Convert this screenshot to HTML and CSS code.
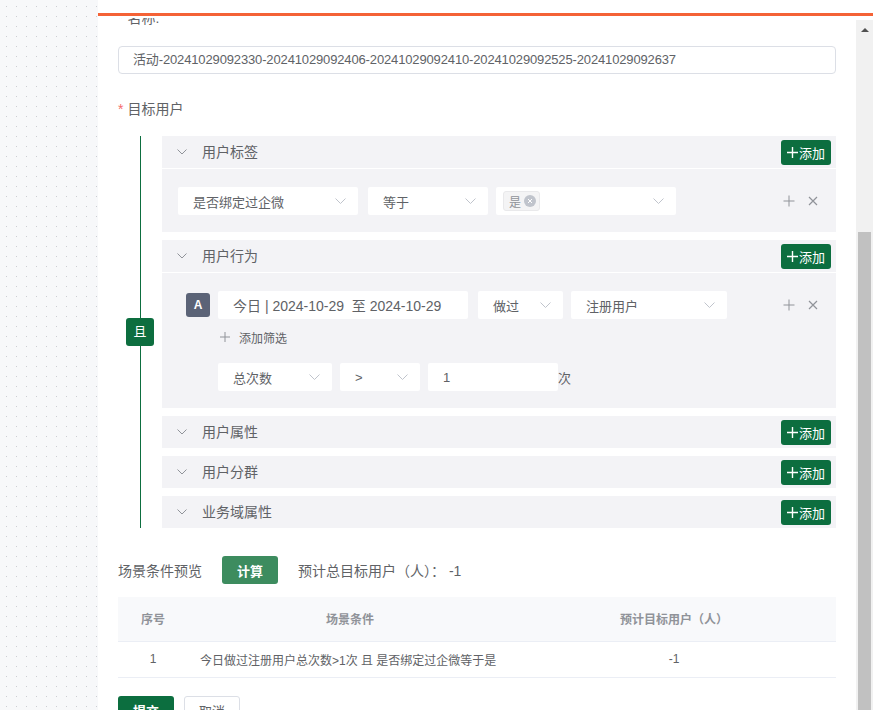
FILE: index.html
```html
<!DOCTYPE html>
<html lang="zh-CN">
<head>
<meta charset="utf-8">
<title>目标用户</title>
<link rel="stylesheet" href="styles.css">
</head>
<body>
<div class="canvas"></div>
<div class="panel">
  <div class="topbar"></div>
  <div class="accent"></div>
  <div class="gap-strip"></div>
  <div class="viewport">
    <div class="content">
      <div class="label cut"><span class="star">*</span>名称:</div>
      <div class="text-input">活动-20241029092330-20241029092406-20241029092410-20241029092525-20241029092637</div>
      <div class="label target"><span class="star">*</span>目标用户</div>

      <div class="groups">
        <div class="rail">
          <div class="rail-line"></div>
          <div class="and-badge">且</div>
          <div class="rail-line"></div>
        </div>
        <div class="sections">
          <div class="section">
            <div class="sec-head">
              <svg class="chev" width="10" height="6" viewBox="0 0 10 6"><polyline points="0.5,0.5 5,5 9.5,0.5" fill="none" stroke="#909399" stroke-width="1"/></svg>
              <span class="sec-title">用户标签</span>
              <button class="add-btn"><svg width="11" height="11" viewBox="0 0 11 11"><path d="M5.5 0v11M0 5.5h11" stroke="#fff" stroke-width="1.4"/></svg>添加</button>
            </div>
            <div class="sec-body">
              <div class="cond-row">
                <div class="select w180"><span>是否绑定过企微</span><svg class="sel-chev" width="11" height="6" viewBox="0 0 11 6"><polyline points="0.5,0.5 5.5,5.5 10.5,0.5" fill="none" stroke="#c0c4cc" stroke-width="1"/></svg></div>
                <div class="select w120 gap10"><span>等于</span><svg class="sel-chev" width="11" height="6" viewBox="0 0 11 6"><polyline points="0.5,0.5 5.5,5.5 10.5,0.5" fill="none" stroke="#c0c4cc" stroke-width="1"/></svg></div>
                <div class="select w180 gap8 tagsel"><span class="tag">是<i class="tag-x"><svg width="6" height="6" viewBox="0 0 6 6"><path d="M1 1l4 4M5 1l-4 4" stroke="#fff" stroke-width="1"/></svg></i></span><svg class="sel-chev" width="11" height="6" viewBox="0 0 11 6"><polyline points="0.5,0.5 5.5,5.5 10.5,0.5" fill="none" stroke="#c0c4cc" stroke-width="1"/></svg></div>
                <div class="row-ops">
                  <svg width="12" height="12" viewBox="0 0 12 12"><path d="M6 0.5v11M0.5 6h11" stroke="#909399" stroke-width="1"/></svg>
                  <svg width="12" height="12" viewBox="0 0 12 12"><path d="M2 2l8 8M10 2l-8 8" stroke="#909399" stroke-width="1.2"/></svg>
                </div>
              </div>
            </div>
          </div>

          <div class="section">
            <div class="sec-head">
              <svg class="chev" width="10" height="6" viewBox="0 0 10 6"><polyline points="0.5,0.5 5,5 9.5,0.5" fill="none" stroke="#909399" stroke-width="1"/></svg>
              <span class="sec-title">用户行为</span>
              <button class="add-btn"><svg width="11" height="11" viewBox="0 0 11 11"><path d="M5.5 0v11M0 5.5h11" stroke="#fff" stroke-width="1.4"/></svg>添加</button>
            </div>
            <div class="sec-body behavior">
              <div class="cond-row">
                <div class="letter">A</div>
                <div class="select w250 gap8 date"><span>今日 | 2024-10-29&nbsp; 至 2024-10-29</span></div>
                <div class="select w85 gap10"><span>做过</span><svg class="sel-chev" width="11" height="6" viewBox="0 0 11 6"><polyline points="0.5,0.5 5.5,5.5 10.5,0.5" fill="none" stroke="#c0c4cc" stroke-width="1"/></svg></div>
                <div class="select w156 gap8"><span>注册用户</span><svg class="sel-chev" width="11" height="6" viewBox="0 0 11 6"><polyline points="0.5,0.5 5.5,5.5 10.5,0.5" fill="none" stroke="#c0c4cc" stroke-width="1"/></svg></div>
                <div class="row-ops">
                  <svg width="12" height="12" viewBox="0 0 12 12"><path d="M6 0.5v11M0.5 6h11" stroke="#909399" stroke-width="1"/></svg>
                  <svg width="12" height="12" viewBox="0 0 12 12"><path d="M2 2l8 8M10 2l-8 8" stroke="#909399" stroke-width="1.2"/></svg>
                </div>
              </div>
              <div class="add-filter"><svg width="10" height="10" viewBox="0 0 10 10"><path d="M5 0v10M0 5h10" stroke="#909399" stroke-width="1"/></svg><span>添加筛选</span></div>
              <div class="cond-row sub">
                <div class="select w114"><span>总次数</span><svg class="sel-chev" width="11" height="6" viewBox="0 0 11 6"><polyline points="0.5,0.5 5.5,5.5 10.5,0.5" fill="none" stroke="#c0c4cc" stroke-width="1"/></svg></div>
                <div class="select w80 gap8"><span>&gt;</span><svg class="sel-chev" width="11" height="6" viewBox="0 0 11 6"><polyline points="0.5,0.5 5.5,5.5 10.5,0.5" fill="none" stroke="#c0c4cc" stroke-width="1"/></svg></div>
                <div class="select w130 gap8"><span>1</span></div>
                <span class="unit">次</span>
              </div>
            </div>
          </div>

          <div class="section">
            <div class="sec-head">
              <svg class="chev" width="10" height="6" viewBox="0 0 10 6"><polyline points="0.5,0.5 5,5 9.5,0.5" fill="none" stroke="#909399" stroke-width="1"/></svg>
              <span class="sec-title">用户属性</span>
              <button class="add-btn"><svg width="11" height="11" viewBox="0 0 11 11"><path d="M5.5 0v11M0 5.5h11" stroke="#fff" stroke-width="1.4"/></svg>添加</button>
            </div>
          </div>
          <div class="section">
            <div class="sec-head">
              <svg class="chev" width="10" height="6" viewBox="0 0 10 6"><polyline points="0.5,0.5 5,5 9.5,0.5" fill="none" stroke="#909399" stroke-width="1"/></svg>
              <span class="sec-title">用户分群</span>
              <button class="add-btn"><svg width="11" height="11" viewBox="0 0 11 11"><path d="M5.5 0v11M0 5.5h11" stroke="#fff" stroke-width="1.4"/></svg>添加</button>
            </div>
          </div>
          <div class="section">
            <div class="sec-head">
              <svg class="chev" width="10" height="6" viewBox="0 0 10 6"><polyline points="0.5,0.5 5,5 9.5,0.5" fill="none" stroke="#909399" stroke-width="1"/></svg>
              <span class="sec-title">业务域属性</span>
              <button class="add-btn"><svg width="11" height="11" viewBox="0 0 11 11"><path d="M5.5 0v11M0 5.5h11" stroke="#fff" stroke-width="1.4"/></svg>添加</button>
            </div>
          </div>
        </div>
      </div>

      <div class="preview-bar">
        <span class="preview-title">场景条件预览</span>
        <button class="calc-btn">计算</button>
        <span class="estimate">预计总目标用户（人）： -1</span>
      </div>

      <table class="preview-table">
        <colgroup><col class="c1"><col class="c2"><col class="c3"></colgroup>
        <thead>
          <tr><th>序号</th><th>场景条件</th><th>预计目标用户（人）</th></tr>
        </thead>
        <tbody>
          <tr><td class="center">1</td><td>今日做过注册用户总次数&gt;1次 且 是否绑定过企微等于是</td><td class="center">-1</td></tr>
        </tbody>
      </table>

      <div class="footer-btns">
        <button class="submit-btn">提交</button>
        <button class="cancel-btn">取消</button>
      </div>
    </div>
    <div class="scrollbar">
      <div class="sb-arrow"></div>
      <div class="sb-track"><div class="sb-thumb"></div></div>
    </div>
  </div>
</div>
</body>
</html>
```

FILE: styles.css
```css
* { box-sizing: border-box; }
html, body { margin: 0; padding: 0; }
body {
  width: 873px;
  height: 710px;
  overflow: hidden;
  display: flex;
  font-family: "Liberation Sans", "Noto Sans CJK SC", sans-serif;
  color: #606266;
  background: #fff;
}
.canvas {
  width: 98px;
  flex: none;
  background-color: #f7f8fa;
  background-image:
    linear-gradient(to right, rgba(247,248,250,0) 0, rgba(247,248,250,0) 1px, #f7f8fa 1px, #f7f8fa 100%),
    linear-gradient(to bottom, #ccced3 0, #ccced3 1px, #f7f8fa 1px, #f7f8fa 100%);
  background-size: 10px 10px, 10px 10px;
  background-position: 6px 6px, 6px 6px;
}
.panel {
  flex: 1;
  display: flex;
  flex-direction: column;
  background: #fff;
  min-width: 0;
}
.topbar { height: 13px; flex: none; }
.accent { height: 3px; background: #f46236; flex: none; }
.gap-strip { height: 2px; flex: none; }
.viewport {
  flex: 1;
  display: flex;
  min-height: 0;
}
.content {
  flex: 1;
  overflow: hidden;
  padding: 0 20px;
  min-width: 0;
}
.label {
  font-size: 14px;
  line-height: 20px;
  height: 20px;
  color: #606266;
}
.label .star { color: #f56c6c; margin-right: 4px; }
.label.cut { margin-top: -10px; }
.text-input {
  margin-top: 18px;
  height: 28px;
  border: 1px solid #dcdfe6;
  border-radius: 4px;
  padding: 0 14px;
  font-size: 13px;
  line-height: 26px;
  letter-spacing: -0.14px;
  color: #606266;
  white-space: nowrap;
  overflow: hidden;
}
.label.target { margin-top: 25px; }

.groups {
  margin-top: 17px;
  display: flex;
}
.rail {
  width: 44px;
  flex: none;
  display: flex;
  flex-direction: column;
  align-items: center;
}
.rail-line {
  flex: 1;
  width: 1px;
  background: #0d6e3f;
}
.and-badge {
  width: 28px;
  height: 28px;
  border-radius: 3px;
  background: #0d6e3f;
  color: #fff;
  font-size: 13px;
  line-height: 28px;
  text-align: center;
}
.sections {
  flex: 1;
  display: flex;
  flex-direction: column;
  gap: 8px;
}
.section { background: #f3f3f6; }
.sec-head {
  height: 32px;
  display: flex;
  align-items: center;
  padding: 0 5px 0 15px;
}
.chev { flex: none; }
.sec-title {
  margin-left: 15px;
  font-size: 14px;
  line-height: 20px;
  color: #606266;
  flex: 1;
}
.add-btn {
  width: 50px;
  height: 25px;
  border: none;
  border-radius: 3px;
  background: #0c6e3f;
  color: #fff;
  font-family: inherit;
  font-size: 13px;
  display: flex;
  align-items: center;
  justify-content: center;
  gap: 1px;
  padding: 0;
}
.sec-body {
  border-top: 1px solid #fff;
  padding: 18px 17px 17px 16px;
}
.sec-body.behavior { padding: 18px 17px 17px 24px; }
.cond-row {
  display: flex;
  align-items: center;
  height: 28px;
}
.select {
  height: 28px;
  background: #fff;
  border-radius: 2px;
  display: flex;
  align-items: center;
  padding: 0 12px 0 15px;
  font-size: 13px;
  color: #606266;
  flex: none;
  white-space: nowrap;
}
.select span:first-child { flex: 1; }
.select.date { font-size: 14px; }
.gap8 { margin-left: 8px; }
.gap10 { margin-left: 10px; }
.w180 { width: 180px; }
.w120 { width: 120px; }
.w250 { width: 250px; }
.w85 { width: 85px; }
.w156 { width: 156px; }
.w114 { width: 114px; }
.w80 { width: 80px; }
.w130 { width: 130px; }
.tagsel { padding-left: 7px; }
.tag {
  flex: none !important;
  display: inline-flex;
  align-items: center;
  height: 20px;
  padding: 0 3px 0 5px;
  background: #f4f4f5;
  border: 1px solid #e9e9eb;
  border-radius: 3px;
  font-size: 12px;
  color: #909399;
  gap: 3px;
}
.tagsel .sel-chev { margin-left: auto; }
.tag-x {
  width: 12px;
  height: 12px;
  border-radius: 50%;
  background: #c0c4cc;
  display: inline-flex;
  align-items: center;
  justify-content: center;
}
.row-ops {
  margin-left: auto;
  display: flex;
  gap: 12px;
  align-items: center;
}
.letter {
  width: 24px;
  height: 24px;
  border-radius: 3px;
  background: #5b6377;
  color: #fff;
  font-size: 12px;
  font-weight: bold;
  text-align: center;
  line-height: 24px;
  flex: none;
}
.add-filter {
  margin-top: 8px;
  height: 20px;
  display: flex;
  align-items: center;
  padding-left: 34px;
  font-size: 12px;
  color: #606266;
}
.add-filter span { margin-left: 9px; }
.cond-row.sub { margin-top: 16px; padding-left: 32px; }
.unit { font-size: 13px; color: #606266; }

.preview-bar {
  margin-top: 28px;
  display: flex;
  align-items: center;
  height: 28px;
  font-size: 14px;
  color: #606266;
}
.calc-btn {
  margin-left: 20px;
  width: 56px;
  height: 28px;
  border: none;
  border-radius: 3px;
  background: #3d8c5f;
  color: #fff;
  font-family: inherit;
  font-size: 13px;
  font-weight: bold;
  padding: 0;
}
.estimate { margin-left: 20px; }

.preview-table {
  margin-top: 13px;
  width: 100%;
  border-collapse: collapse;
  table-layout: fixed;
  font-size: 12px;
}
.c1 { width: 70px; }
.preview-table th {
  height: 44px;
  background: #f8f9fb;
  color: #909399;
  font-weight: bold;
  text-align: center;
  border-bottom: 1px solid #ebeef5;
  padding: 0;
}
.preview-table td {
  height: 36px;
  border-bottom: 1px solid #ebeef5;
  color: #606266;
  padding: 0 12px;
  white-space: nowrap;
}
.preview-table td.center { text-align: center; padding: 0; }

.footer-btns {
  margin-top: 18px;
  display: flex;
  gap: 10px;
}
.submit-btn, .cancel-btn {
  width: 56px;
  height: 30px;
  border-radius: 3px;
  font-family: inherit;
  font-size: 13px;
  padding: 0;
}
.submit-btn { background: #0c6e3f; color: #fff; border: none; font-weight: bold; }
.cancel-btn { background: #fff; color: #606266; border: 1px solid #dcdfe6; }

.scrollbar {
  width: 17px;
  flex: none;
  margin-top: 2px;
  background: #f1f1f1;
  display: flex;
  flex-direction: column;
  align-items: center;
}
.sb-arrow {
  margin-top: 8px;
  width: 0;
  height: 0;
  border-left: 4px solid transparent;
  border-right: 4px solid transparent;
  border-bottom: 4px solid #505050;
}
.sb-track {
  flex: 1;
  width: 100%;
  display: flex;
  flex-direction: column;
  justify-content: flex-end;
  padding: 0 2px;
}
.sb-thumb {
  height: 478px;
  background: #c1c1c1;
}
```
